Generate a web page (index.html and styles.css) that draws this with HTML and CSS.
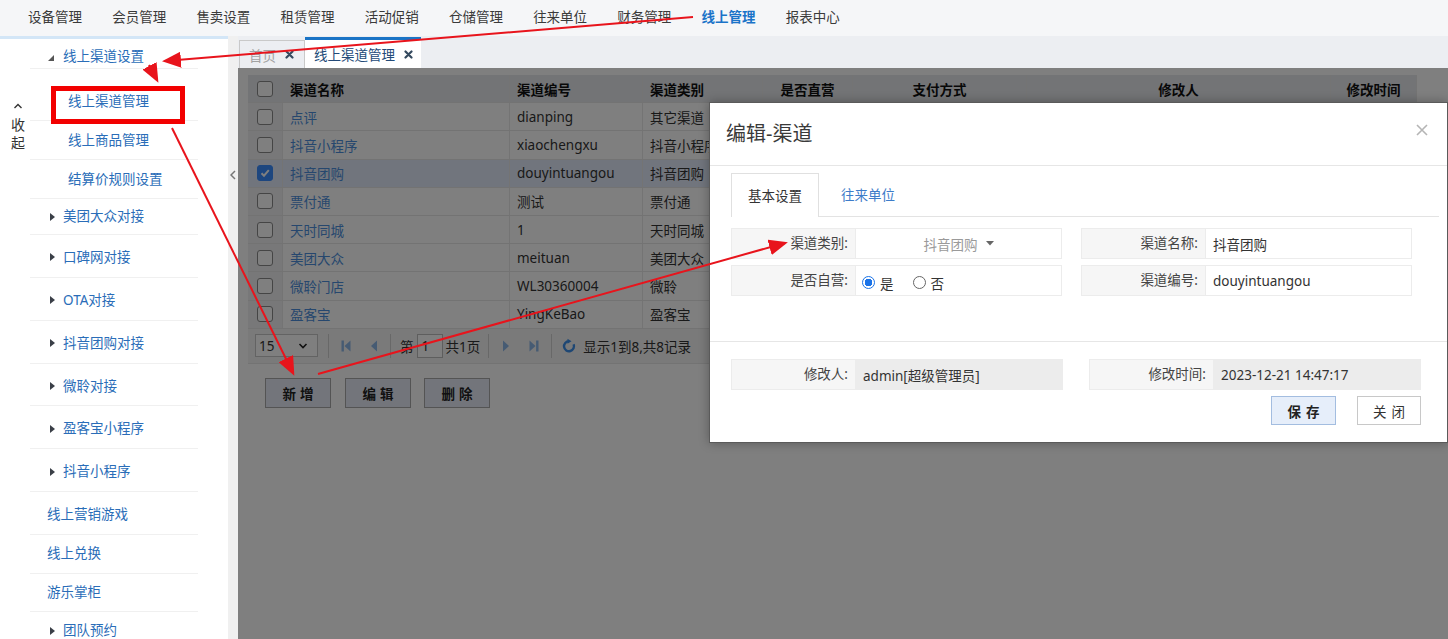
FILE: index.html
```html
<!DOCTYPE html>
<html lang="zh-CN">
<head>
<meta charset="utf-8">
<title>线上渠道管理</title>
<link rel="stylesheet" href="styles.css">
</head>
<body>
<header class="topnav">
  <a class="nav-item">设备管理</a>
  <a class="nav-item">会员管理</a>
  <a class="nav-item">售卖设置</a>
  <a class="nav-item">租赁管理</a>
  <a class="nav-item">活动促销</a>
  <a class="nav-item">仓储管理</a>
  <a class="nav-item">往来单位</a>
  <a class="nav-item">财务管理</a>
  <a class="nav-item active">线上管理</a>
  <a class="nav-item">报表中心</a>
</header>

<div class="shell">
  <aside class="sidebar">
    <div class="collapse">
      <svg class="chev-up" width="10" height="6" viewBox="0 0 10 6"><polyline points="1.5,5 5,1.5 8.5,5" fill="none" stroke="#333" stroke-width="1.4"/></svg>
      <span class="collapse-ch">收</span>
      <span class="collapse-ch">起</span>
    </div>
    <ul class="menu">
      <li class="menu-group">
        <div class="menu-head"><svg class="tri-open" width="6" height="6" viewBox="0 0 6 6"><polygon points="6,0 6,6 0,6" fill="#555"/></svg>线上渠道设置</div>
        <ul class="submenu">
          <li class="sub-item">线上渠道管理</li>
          <li class="sub-item">线上商品管理</li>
          <li class="sub-item">结算价规则设置</li>
        </ul>
      </li>
      <li class="menu-item first"><svg class="tri" width="5" height="8" viewBox="0 0 5 8"><polygon points="0,0 5,4 0,8" fill="#3a3f47"/></svg>美团大众对接</li>
      <li class="menu-item"><svg class="tri" width="5" height="8" viewBox="0 0 5 8"><polygon points="0,0 5,4 0,8" fill="#3a3f47"/></svg>口碑网对接</li>
      <li class="menu-item"><svg class="tri" width="5" height="8" viewBox="0 0 5 8"><polygon points="0,0 5,4 0,8" fill="#3a3f47"/></svg>OTA对接</li>
      <li class="menu-item"><svg class="tri" width="5" height="8" viewBox="0 0 5 8"><polygon points="0,0 5,4 0,8" fill="#3a3f47"/></svg>抖音团购对接</li>
      <li class="menu-item"><svg class="tri" width="5" height="8" viewBox="0 0 5 8"><polygon points="0,0 5,4 0,8" fill="#3a3f47"/></svg>微聆对接</li>
      <li class="menu-item"><svg class="tri" width="5" height="8" viewBox="0 0 5 8"><polygon points="0,0 5,4 0,8" fill="#3a3f47"/></svg>盈客宝小程序</li>
      <li class="menu-item"><svg class="tri" width="5" height="8" viewBox="0 0 5 8"><polygon points="0,0 5,4 0,8" fill="#3a3f47"/></svg>抖音小程序</li>
      <li class="menu-item plain">线上营销游戏</li>
      <li class="menu-item plain short">线上兑换</li>
      <li class="menu-item plain short">游乐掌柜</li>
      <li class="menu-item short"><svg class="tri" width="5" height="8" viewBox="0 0 5 8"><polygon points="0,0 5,4 0,8" fill="#3a3f47"/></svg>团队预约</li>
    </ul>
  </aside>

  <div class="splitter">
    <svg class="split-arrow" width="6" height="10" viewBox="0 0 6 10"><polyline points="5,1 1,5 5,9" fill="none" stroke="#777" stroke-width="1.5"/></svg>
  </div>

  <section class="workspace">
    <nav class="tabs">
      <div class="tab">首页<svg class="tab-x" width="9" height="9" viewBox="0 0 9 9"><path d="M1.5 1.5 L7.5 7.5 M7.5 1.5 L1.5 7.5" stroke="#34495e" stroke-width="2.2" stroke-linecap="round"/></svg></div>
      <div class="tab active">线上渠道管理<svg class="tab-x" width="9" height="9" viewBox="0 0 9 9"><path d="M1.5 1.5 L7.5 7.5 M7.5 1.5 L1.5 7.5" stroke="#34495e" stroke-width="2.2" stroke-linecap="round"/></svg></div>
    </nav>

    <div class="content">
      <div class="page">
        <div class="grid">
          <div class="row head">
            <div class="cell w-ck ck"><span class="cbox"></span></div>
            <div class="cell w-name">渠道名称</div>
            <div class="cell w-code">渠道编号</div>
            <div class="cell w-type">渠道类别</div>
            <div class="cell w-direct c">是否直营</div>
            <div class="cell w-pay c">支付方式</div>
            <div class="cell w-user c">修改人</div>
            <div class="cell w-time c">修改时间</div>
          </div>
          <div class="row">
            <div class="cell w-ck ck"><span class="cbox"></span></div>
            <div class="cell w-name name">点评</div>
            <div class="cell w-code">dianping</div>
            <div class="cell w-type">其它渠道</div>
            <div class="cell w-direct"></div><div class="cell w-pay"></div><div class="cell w-user"></div><div class="cell w-time"></div>
          </div>
          <div class="row">
            <div class="cell w-ck ck"><span class="cbox"></span></div>
            <div class="cell w-name name">抖音小程序</div>
            <div class="cell w-code">xiaochengxu</div>
            <div class="cell w-type">抖音小程序</div>
            <div class="cell w-direct"></div><div class="cell w-pay"></div><div class="cell w-user"></div><div class="cell w-time"></div>
          </div>
          <div class="row sel">
            <div class="cell w-ck ck"><span class="cbox on"><svg width="12" height="12" viewBox="0 0 12 12"><polyline points="2.5,6.2 5,8.7 9.8,3.2" fill="none" stroke="#fff" stroke-width="2"/></svg></span></div>
            <div class="cell w-name name">抖音团购</div>
            <div class="cell w-code">douyintuangou</div>
            <div class="cell w-type">抖音团购</div>
            <div class="cell w-direct"></div><div class="cell w-pay"></div><div class="cell w-user"></div><div class="cell w-time"></div>
          </div>
          <div class="row">
            <div class="cell w-ck ck"><span class="cbox"></span></div>
            <div class="cell w-name name">票付通</div>
            <div class="cell w-code">测试</div>
            <div class="cell w-type">票付通</div>
            <div class="cell w-direct"></div><div class="cell w-pay"></div><div class="cell w-user"></div><div class="cell w-time"></div>
          </div>
          <div class="row">
            <div class="cell w-ck ck"><span class="cbox"></span></div>
            <div class="cell w-name name">天时同城</div>
            <div class="cell w-code">1</div>
            <div class="cell w-type">天时同城</div>
            <div class="cell w-direct"></div><div class="cell w-pay"></div><div class="cell w-user"></div><div class="cell w-time"></div>
          </div>
          <div class="row">
            <div class="cell w-ck ck"><span class="cbox"></span></div>
            <div class="cell w-name name">美团大众</div>
            <div class="cell w-code">meituan</div>
            <div class="cell w-type">美团大众</div>
            <div class="cell w-direct"></div><div class="cell w-pay"></div><div class="cell w-user"></div><div class="cell w-time"></div>
          </div>
          <div class="row">
            <div class="cell w-ck ck"><span class="cbox"></span></div>
            <div class="cell w-name name">微聆门店</div>
            <div class="cell w-code">WL30360004</div>
            <div class="cell w-type">微聆</div>
            <div class="cell w-direct"></div><div class="cell w-pay"></div><div class="cell w-user"></div><div class="cell w-time"></div>
          </div>
          <div class="row">
            <div class="cell w-ck ck"><span class="cbox"></span></div>
            <div class="cell w-name name">盈客宝</div>
            <div class="cell w-code">YingKeBao</div>
            <div class="cell w-type">盈客宝</div>
            <div class="cell w-direct"></div><div class="cell w-pay"></div><div class="cell w-user"></div><div class="cell w-time"></div>
          </div>
          <div class="pager">
            <div class="pg-select"><span>15</span><svg width="10" height="6" viewBox="0 0 10 6"><polyline points="1.5,1 5,4.5 8.5,1" fill="none" stroke="#222" stroke-width="1.6"/></svg></div>
            <span class="pg-sep"></span>
            <svg class="pg-ico m9" width="16" height="16" viewBox="0 0 16 16"><rect x="3.5" y="2.5" width="2.4" height="11" fill="#8db6e6"/><polygon points="12.5,2.5 12.5,13.5 6.5,8" fill="#8db6e6"/></svg>
            <svg class="pg-ico m12" width="16" height="16" viewBox="0 0 16 16"><polygon points="11,2.5 11,13.5 5,8" fill="#8db6e6"/></svg>
            <span class="pg-sep s8"></span>
            <span class="pg-txt m9">第</span>
            <span class="pg-input">1</span>
            <span class="pg-txt m3">共1页</span>
            <span class="pg-sep s8"></span>
            <svg class="pg-ico m9" width="16" height="16" viewBox="0 0 16 16"><polygon points="5,2.5 5,13.5 11,8" fill="#8db6e6"/></svg>
            <svg class="pg-ico m12" width="16" height="16" viewBox="0 0 16 16"><polygon points="3.5,2.5 3.5,13.5 9.5,8" fill="#8db6e6"/><rect x="10.1" y="2.5" width="2.4" height="11" fill="#8db6e6"/></svg>
            <span class="pg-sep s9"></span>
            <svg class="pg-ico m9" width="16" height="16" viewBox="0 0 16 16"><path d="M8 3.2 A5 5 0 1 0 12.6 6.2" fill="none" stroke="#3d8fe8" stroke-width="2.4"/><polygon points="6.5,0.8 10.5,3.2 6.5,5.8" fill="#3d8fe8"/></svg>
            <span class="pg-txt m6">显示1到8,共8记录</span>
          </div>
        </div>

        <div class="actions">
          <button class="act-btn">新增</button>
          <button class="act-btn">编辑</button>
          <button class="act-btn">删除</button>
        </div>
      </div>

      <div class="mask"></div>

      <div class="dialog">
        <div class="dlg-title">
          <span class="dlg-title-text">编辑-渠道</span>
          <svg class="dlg-close" width="12" height="12" viewBox="0 0 12 12"><path d="M1 1 L11 11 M11 1 L1 11" stroke="#b5b5b5" stroke-width="1.6"/></svg>
        </div>
        <div class="dlg-body">
          <div class="dlg-tabs">
            <span class="dtab active">基本设置</span>
            <span class="dtab link">往来单位</span>
          </div>
          <div class="form-grid">
            <div class="field">
              <span class="f-label">渠道类别:</span>
              <span class="f-value combo">抖音团购<svg width="8" height="5" viewBox="0 0 8 5"><polygon points="0,0 8,0 4,4.5" fill="#666"/></svg></span>
            </div>
            <div class="field">
              <span class="f-label">渠道名称:</span>
              <span class="f-value">抖音团购</span>
            </div>
            <div class="field">
              <span class="f-label">是否自营:</span>
              <span class="f-value radios">
                <span class="radio on"></span><span class="r-txt">是</span>
                <span class="radio"></span><span class="r-txt">否</span>
              </span>
            </div>
            <div class="field">
              <span class="f-label">渠道编号:</span>
              <span class="f-value">douyintuangou</span>
            </div>
          </div>
        </div>
        <div class="dlg-foot">
          <div class="form-grid wide">
            <div class="field">
              <span class="f-label">修改人:</span>
              <span class="f-value ro">admin[超级管理员]</span>
            </div>
            <div class="field">
              <span class="f-label">修改时间:</span>
              <span class="f-value ro">2023-12-21 14:47:17</span>
            </div>
          </div>
          <div class="dlg-btns">
            <button class="btn primary">保存</button>
            <button class="btn">关闭</button>
          </div>
        </div>
      </div>
    </div>
  </section>
</div>

<svg class="annot" width="1448" height="639" viewBox="0 0 1448 639">
  <defs>
    <marker id="ah" markerUnits="userSpaceOnUse" markerWidth="20" markerHeight="16" refX="16" refY="8" orient="auto">
      <path d="M0,0 L19,8 L0,16 z" fill="#e8141c"/>
    </marker>
  </defs>
  <rect x="53.5" y="88.5" width="129" height="33" fill="none" stroke="#f20000" stroke-width="5"/>
  <line x1="693" y1="17" x2="165" y2="61" stroke="#e8141c" stroke-width="2" marker-end="url(#ah)"/>
  <line x1="149" y1="65" x2="157" y2="80" stroke="#e8141c" stroke-width="2" marker-end="url(#ah)"/>
  <line x1="172" y1="128" x2="293" y2="373" stroke="#e8141c" stroke-width="2" marker-end="url(#ah)"/>
  <line x1="318" y1="374" x2="785" y2="243" stroke="#e8141c" stroke-width="2" marker-end="url(#ah)"/>
</svg>
</body>
</html>
```

FILE: styles.css
```css
* { box-sizing: border-box; }

html, body { margin: 0; padding: 0; }

body {
  width: 1448px;
  height: 639px;
  overflow: hidden;
  position: relative;
  font-family: "Noto Sans", "Noto Sans CJK SC", sans-serif;
  font-size: 13.5px;
  color: #333;
  background: #fff;
}

/* ---------- top navigation ---------- */
.topnav {
  height: 36px;
  background: #f5f6f8;
  display: flex;
  align-items: center;
  gap: 30.2px;
  padding: 0 0 2px 28px;
}
.nav-item {
  color: #3a3a3a;
  line-height: 20px;
  white-space: nowrap;
}
.nav-item.active {
  color: #1a73c8;
  font-weight: 700;
}

/* ---------- shell ---------- */
.shell {
  display: flex;
  height: 603px;
}

/* ---------- sidebar ---------- */
.sidebar {
  width: 228px;
  flex: none;
  display: flex;
  border-top: 3px solid #d3e6f7;
  background: #fff;
  overflow: hidden;
}
.collapse {
  width: 30px;
  flex: none;
  display: flex;
  flex-direction: column;
  padding: 64px 0 0 11px;
  color: #333;
}
.chev-up { display: block; margin: 0 0 7px 2px; }
.collapse-ch { display: block; line-height: 18px; font-size: 14px; }

.menu {
  list-style: none;
  margin: 0;
  padding: 0;
  width: 168px;
  flex: none;
  color: #2a6db8;
}
.menu-head {
  display: flex;
  align-items: center;
  padding: 6px 0 0 18px;
  line-height: 23px;
  border-bottom: 1px solid #f0f0f0;
}
.tri-open { margin-right: 9px; margin-top: 2px; }
.submenu {
  list-style: none;
  margin: 0;
  padding: 13px 0 0 0;
}
.sub-item {
  padding-left: 38px;
  line-height: 38px;
  border-bottom: 1px solid #f0f0f0;
}
.menu-item {
  display: flex;
  align-items: center;
  padding: 3px 0 0 19.5px;
  line-height: 38.86px;
  border-bottom: 1px solid #f0f0f0;
}
.menu-item.first { padding-top: 0; line-height: 35px; }
.menu-item.plain { padding-left: 17px; }
.menu-item.short { padding-top: 0; line-height: 37.5px; }
.tri { margin-right: 8.5px; flex: none; }

/* ---------- splitter ---------- */
.splitter {
  width: 10px;
  flex: none;
  background: #f0f0f0;
  padding: 134px 0 0 2px;
}
.split-arrow { display: block; }

/* ---------- workspace ---------- */
.workspace {
  flex: 1;
  display: flex;
  flex-direction: column;
  min-width: 0;
}
.tabs {
  height: 32px;
  flex: none;
  background: #eceef2;
  display: flex;
  align-items: flex-end;
  padding-left: 1px;
}
.tab {
  height: 28px;
  display: flex;
  align-items: center;
  padding: 0 10px 0 9px;
  border: 1px solid #c9c9c9;
  border-bottom: none;
  color: #a3a3a3;
  white-space: nowrap;
}
.tab .tab-x { margin-left: 9px; }
.tab.active {
  height: 31px;
  border: none;
  border-top: 3px solid #1a74c6;
  background: #fff;
  color: #234a78;
  padding: 0 8px 0 9px;
}

.content {
  flex: 1;
  position: relative;
  background: #fff;
  overflow: hidden;
}
.page { padding: 7px 10px; }

/* ---------- datagrid ---------- */
.grid { width: 1169px; }
.row {
  display: flex;
  height: 28.2px;
  border-bottom: 1px solid #e6e6e6;
}
.cell {
  flex: none;
  display: flex;
  align-items: center;
  padding: 0 7px;
  border-right: 1px solid #e9e9e9;
  white-space: nowrap;
  overflow: hidden;
  color: #333;
}
.cell.c { justify-content: center; }
.w-ck { width: 35px; }
.w-name { width: 227px; }
.w-code { width: 133px; }
.w-type { width: 120px; }
.w-direct { width: 90px; }
.w-pay { width: 174px; }
.w-user { width: 304px; }
.w-time { width: 86px; }
.cell.ck { justify-content: center; padding: 0; background: #f1f1f3; }
.row.head { background: #e6e8ed; }
.row.head .cell { color: #111; font-weight: 700; }
.row.head .cell.ck { background: #e6e8ed; }
.row.sel { background: #e3ebfa; }
.row.sel .cell.ck { background: #e3ebfa; }
.cell.name { color: #4d8fdc; }

.cbox {
  width: 16px;
  height: 16px;
  border: 1px solid #8a8a8a;
  border-radius: 3px;
  background: #fff;
  display: flex;
  align-items: center;
  justify-content: center;
}
.cbox.on { background: #3a8cff; border-color: #3a8cff; }

/* ---------- pager ---------- */
.pager {
  height: 35px;
  display: flex;
  align-items: center;
  padding-left: 7px;
  background: #f5f5f5;
  border-bottom: 1px solid #e6e6e6;
}
.pg-select {
  width: 63px;
  height: 23px;
  border: 1px solid #c6c6c6;
  background: #fff;
  display: flex;
  align-items: center;
  justify-content: space-between;
  padding: 0 9px 0 3px;
  color: #333;
}
.pg-sep {
  width: 1px;
  height: 24px;
  background: #d0d0d0;
  margin-left: 10px;
}
.pg-sep.s8 { margin-left: 8px; }
.pg-sep.s9 { margin-left: 9px; }
.pg-ico { flex: none; display: block; }
.m3 { margin-left: 3px; }
.m6 { margin-left: 6px; }
.m9 { margin-left: 9px; }
.m12 { margin-left: 12px; }
.pg-txt { white-space: nowrap; color: #333; }
.pg-input {
  margin-left: 3px;
  width: 26px;
  height: 24px;
  border: 1px solid #bdbdbd;
  background: #fff;
  padding-left: 4px;
  line-height: 22px;
}

/* ---------- action buttons ---------- */
.actions {
  display: flex;
  padding: 14px 0 0 17px;
}
.act-btn {
  width: 66px;
  height: 30px;
  margin-right: 14px;
  border: 1px solid #a8a8a8;
  background: #e6ebf6;
  font-family: inherit;
  font-size: 13.5px;
  font-weight: 700;
  color: #222;
  letter-spacing: 4px;
  padding: 0 0 0 4px;
}
.act-btn:last-child { margin-left: -1px; }

/* ---------- modal ---------- */
.mask {
  position: absolute;
  inset: 0;
  background: rgba(0, 0, 0, 0.5);
}
.dialog {
  position: absolute;
  left: 471px;
  top: 34px;
  width: 739px;
  height: 341px;
  background: #fff;
  border: 1px solid #5a5a5a;
  box-shadow: 0 0 10px rgba(0, 0, 0, 0.3);
}
.dlg-title {
  height: 63px;
  border-bottom: 1px solid #e6e6e6;
  display: flex;
  align-items: center;
  justify-content: space-between;
  padding: 0 19px 0 16px;
}
.dlg-title-text {
  font-size: 20px;
  color: #3a3a3a;
  line-height: 28px;
}
.dlg-close { align-self: flex-start; margin-top: 21px; }

.dlg-body {
  padding: 7px 8px 45px 21px;
  border-bottom: 1px solid #e6e6e6;
}
.dlg-tabs {
  height: 44px;
  display: flex;
  border-bottom: 1px solid #e3e3e3;
}
.dtab {
  display: flex;
  align-items: center;
  line-height: 20px;
}
.dtab.active {
  width: 88px;
  justify-content: center;
  border: 1px solid #e0e0e0;
  border-bottom: none;
  background: #fff;
  height: 44px;
  margin-bottom: -1px;
  color: #333;
}
.dtab.link { margin-left: 22px; color: #3d7cc9; }

.form-grid {
  display: grid;
  grid-template-columns: 331px 331px;
  column-gap: 19px;
  row-gap: 6px;
  margin-top: 11px;
}
.form-grid.wide {
  grid-template-columns: 332px 332px;
  column-gap: 26px;
  margin-top: 0;
}
.field {
  display: flex;
  height: 31px;
  border: 1px solid #ececec;
}
.f-label {
  width: 123px;
  flex: none;
  background: #f6f6f6;
  text-align: right;
  padding-right: 7px;
  line-height: 29px;
  color: #444;
}
.f-value {
  flex: 1;
  display: flex;
  align-items: center;
  padding-left: 7px;
  border-left: 1px solid #ececec;
  color: #333;
  white-space: nowrap;
}
.f-value.combo {
  justify-content: center;
  color: #9a9a9a;
  padding-left: 0;
  gap: 8px;
}
.f-value.ro { background: #ececec; }
.radios { padding-left: 6px; padding-top: 3px; }
.radio {
  width: 13px;
  height: 13px;
  border: 1px solid #666;
  border-radius: 50%;
  background: #fff;
  flex: none;
}
.radio.on {
  border-color: #1a73e8;
  background: radial-gradient(circle, #1a73e8 0 3.6px, #fff 4px);
}
.r-txt { margin: 2px 19px 0 5px; }

.dlg-foot { padding: 17px 25px 0 21px; }
.dlg-btns {
  display: flex;
  justify-content: flex-end;
  margin-top: 6px;
  padding-right: 1px;
}
.btn {
  height: 29px;
  width: 64px;
  margin-left: 21px;
  border: 1px solid #c8c8c8;
  background: #fff;
  font-family: inherit;
  font-size: 13.5px;
  color: #333;
  letter-spacing: 5px;
  padding: 0 0 0 5px;
}
.btn.primary {
  width: 65px;
  background: #e6eefa;
  border-color: #a3bde0;
  font-weight: 700;
  color: #222;
}

/* ---------- annotation overlay ---------- */
.annot {
  position: absolute;
  left: 0;
  top: 0;
  pointer-events: none;
  z-index: 50;
}
```
